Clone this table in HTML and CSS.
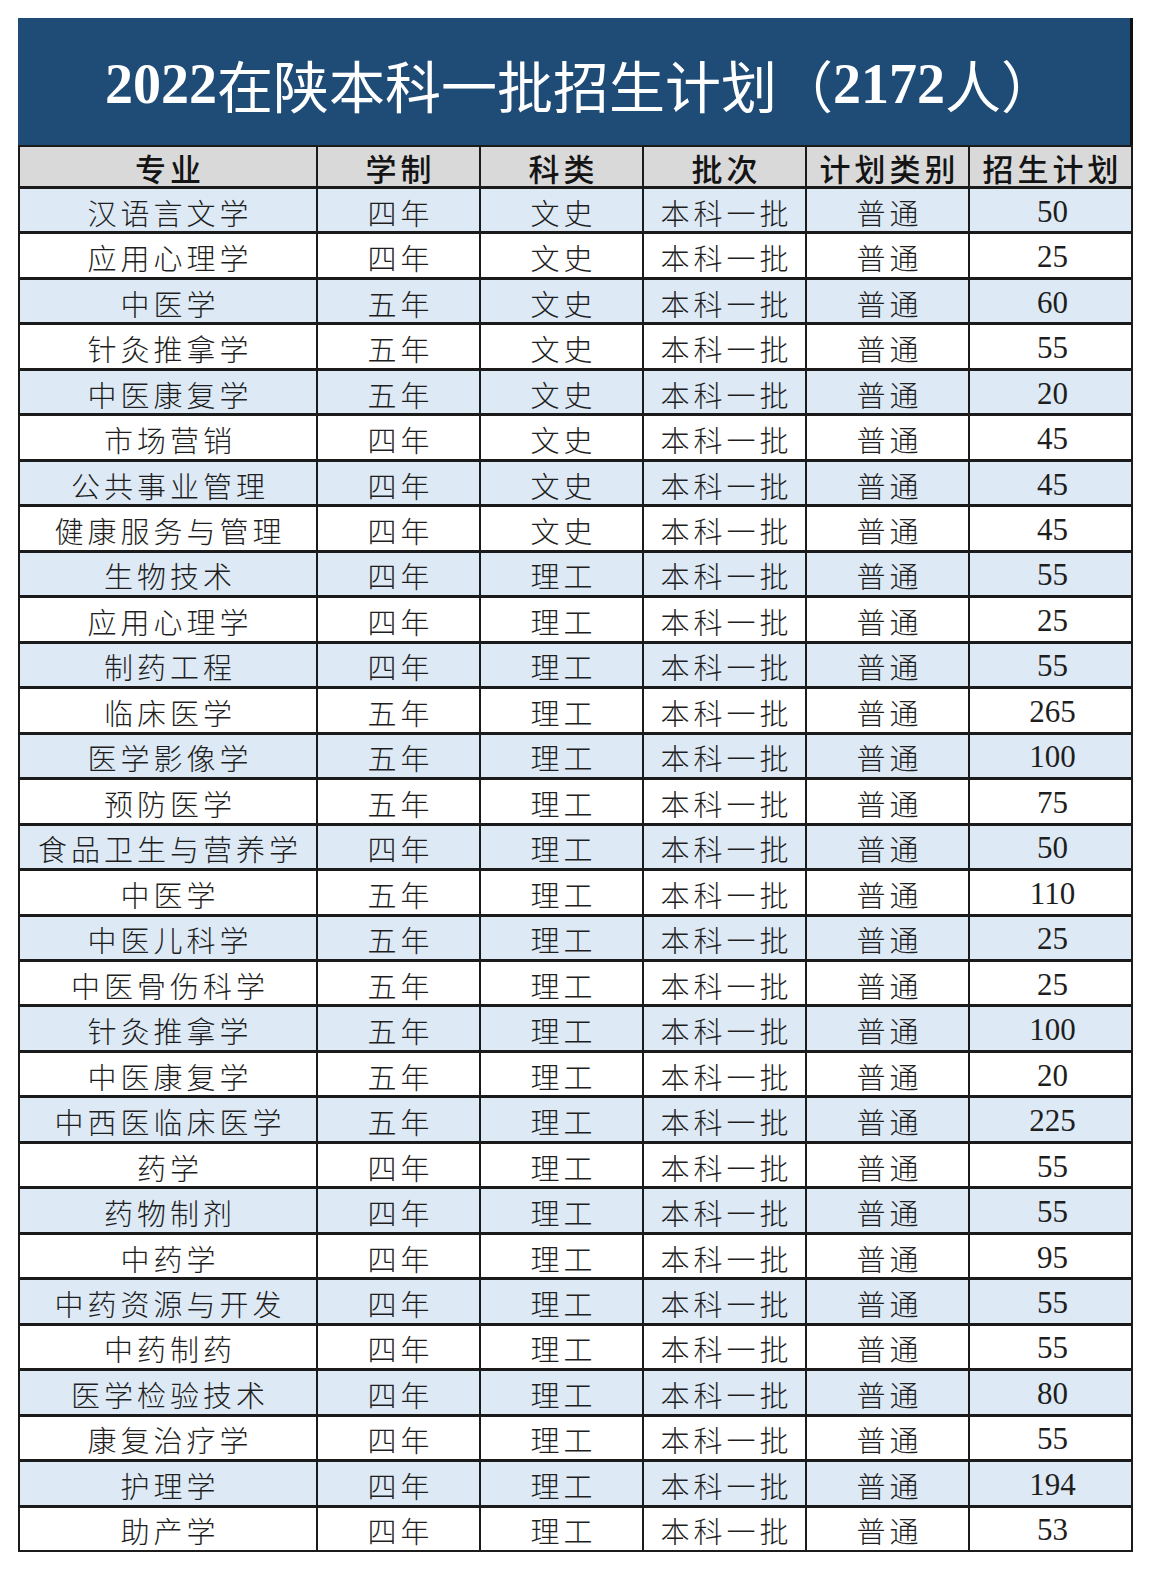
FILE: index.html
```html
<!DOCTYPE html>
<html lang="zh-CN">
<head>
<meta charset="utf-8">
<title>2022在陕本科一批招生计划</title>
<link rel="stylesheet" href="styles.css">
</head>
<body>
<div class="sheet">
  <div class="title"><span class="num">2022</span>在陕本科一批招生计划（<span class="num">2172</span>人）</div>
  <div class="grid">
    <div class="cell head">专业</div><div class="cell head">学制</div><div class="cell head">科类</div><div class="cell head">批次</div><div class="cell head">计划类别</div><div class="cell head">招生计划</div>

    <div class="cell b">汉语言文学</div><div class="cell b">四年</div><div class="cell b">文史</div><div class="cell b">本科一批</div><div class="cell b">普通</div><div class="cell b n">50</div>
    <div class="cell">应用心理学</div><div class="cell">四年</div><div class="cell">文史</div><div class="cell">本科一批</div><div class="cell">普通</div><div class="cell n">25</div>
    <div class="cell b">中医学</div><div class="cell b">五年</div><div class="cell b">文史</div><div class="cell b">本科一批</div><div class="cell b">普通</div><div class="cell b n">60</div>
    <div class="cell">针灸推拿学</div><div class="cell">五年</div><div class="cell">文史</div><div class="cell">本科一批</div><div class="cell">普通</div><div class="cell n">55</div>
    <div class="cell b">中医康复学</div><div class="cell b">五年</div><div class="cell b">文史</div><div class="cell b">本科一批</div><div class="cell b">普通</div><div class="cell b n">20</div>
    <div class="cell">市场营销</div><div class="cell">四年</div><div class="cell">文史</div><div class="cell">本科一批</div><div class="cell">普通</div><div class="cell n">45</div>
    <div class="cell b">公共事业管理</div><div class="cell b">四年</div><div class="cell b">文史</div><div class="cell b">本科一批</div><div class="cell b">普通</div><div class="cell b n">45</div>
    <div class="cell">健康服务与管理</div><div class="cell">四年</div><div class="cell">文史</div><div class="cell">本科一批</div><div class="cell">普通</div><div class="cell n">45</div>
    <div class="cell b">生物技术</div><div class="cell b">四年</div><div class="cell b">理工</div><div class="cell b">本科一批</div><div class="cell b">普通</div><div class="cell b n">55</div>
    <div class="cell">应用心理学</div><div class="cell">四年</div><div class="cell">理工</div><div class="cell">本科一批</div><div class="cell">普通</div><div class="cell n">25</div>
    <div class="cell b">制药工程</div><div class="cell b">四年</div><div class="cell b">理工</div><div class="cell b">本科一批</div><div class="cell b">普通</div><div class="cell b n">55</div>
    <div class="cell">临床医学</div><div class="cell">五年</div><div class="cell">理工</div><div class="cell">本科一批</div><div class="cell">普通</div><div class="cell n">265</div>
    <div class="cell b">医学影像学</div><div class="cell b">五年</div><div class="cell b">理工</div><div class="cell b">本科一批</div><div class="cell b">普通</div><div class="cell b n">100</div>
    <div class="cell">预防医学</div><div class="cell">五年</div><div class="cell">理工</div><div class="cell">本科一批</div><div class="cell">普通</div><div class="cell n">75</div>
    <div class="cell b">食品卫生与营养学</div><div class="cell b">四年</div><div class="cell b">理工</div><div class="cell b">本科一批</div><div class="cell b">普通</div><div class="cell b n">50</div>
    <div class="cell">中医学</div><div class="cell">五年</div><div class="cell">理工</div><div class="cell">本科一批</div><div class="cell">普通</div><div class="cell n">110</div>
    <div class="cell b">中医儿科学</div><div class="cell b">五年</div><div class="cell b">理工</div><div class="cell b">本科一批</div><div class="cell b">普通</div><div class="cell b n">25</div>
    <div class="cell">中医骨伤科学</div><div class="cell">五年</div><div class="cell">理工</div><div class="cell">本科一批</div><div class="cell">普通</div><div class="cell n">25</div>
    <div class="cell b">针灸推拿学</div><div class="cell b">五年</div><div class="cell b">理工</div><div class="cell b">本科一批</div><div class="cell b">普通</div><div class="cell b n">100</div>
    <div class="cell">中医康复学</div><div class="cell">五年</div><div class="cell">理工</div><div class="cell">本科一批</div><div class="cell">普通</div><div class="cell n">20</div>
    <div class="cell b">中西医临床医学</div><div class="cell b">五年</div><div class="cell b">理工</div><div class="cell b">本科一批</div><div class="cell b">普通</div><div class="cell b n">225</div>
    <div class="cell">药学</div><div class="cell">四年</div><div class="cell">理工</div><div class="cell">本科一批</div><div class="cell">普通</div><div class="cell n">55</div>
    <div class="cell b">药物制剂</div><div class="cell b">四年</div><div class="cell b">理工</div><div class="cell b">本科一批</div><div class="cell b">普通</div><div class="cell b n">55</div>
    <div class="cell">中药学</div><div class="cell">四年</div><div class="cell">理工</div><div class="cell">本科一批</div><div class="cell">普通</div><div class="cell n">95</div>
    <div class="cell b">中药资源与开发</div><div class="cell b">四年</div><div class="cell b">理工</div><div class="cell b">本科一批</div><div class="cell b">普通</div><div class="cell b n">55</div>
    <div class="cell">中药制药</div><div class="cell">四年</div><div class="cell">理工</div><div class="cell">本科一批</div><div class="cell">普通</div><div class="cell n">55</div>
    <div class="cell b">医学检验技术</div><div class="cell b">四年</div><div class="cell b">理工</div><div class="cell b">本科一批</div><div class="cell b">普通</div><div class="cell b n">80</div>
    <div class="cell">康复治疗学</div><div class="cell">四年</div><div class="cell">理工</div><div class="cell">本科一批</div><div class="cell">普通</div><div class="cell n">55</div>
    <div class="cell b">护理学</div><div class="cell b">四年</div><div class="cell b">理工</div><div class="cell b">本科一批</div><div class="cell b">普通</div><div class="cell b n">194</div>
    <div class="cell">助产学</div><div class="cell">四年</div><div class="cell">理工</div><div class="cell">本科一批</div><div class="cell">普通</div><div class="cell n">53</div>
  </div>
</div>
</body>
</html>
```

FILE: styles.css
```css
html, body {
  margin: 0;
  padding: 0;
  background: #ffffff;
}

.sheet {
  margin: 18px 0 0 18px;
  width: 1115px;
}

.title {
  box-sizing: border-box;
  height: 127px;
  background: #1f4c77;
  border-right: 3px solid #111;
  color: #ffffff;
  font-family: "Liberation Serif", "Noto Sans CJK SC", serif;
  font-size: 56px;
  font-weight: 400;
  display: flex;
  align-items: center;
  justify-content: center;
  padding-top: 4px;
  padding-left: 14px;
}

.title .num {
  font-weight: 700;
  font-size: 56px;
}

.grid {
  display: grid;
  grid-template-columns: 296px repeat(5, 161px);
  grid-template-rows: 39px;
  grid-auto-rows: 42.47px;
  gap: 3px 2px;
  padding: 2px;
  background: #1b1b1b;
}

.cell {
  background: #ffffff;
  display: flex;
  align-items: center;
  justify-content: center;
  font-family: "Liberation Serif", "Noto Sans CJK SC", serif;
  font-size: 29px;
  font-weight: 300;
  color: #1e1e1e;
  letter-spacing: 4px;
  padding-left: 4px;
  padding-top: 3px;
  white-space: nowrap;
}

.cell.b {
  background: #dde9f5;
}

.cell.head {
  background: #d9d9d9;
  font-size: 31px;
  font-weight: 500;
  color: #141414;
  padding-top: 1px;
}

.cell.n {
  font-size: 31px;
  font-weight: 400;
  letter-spacing: 0;
  padding-left: 4px;
}
```
